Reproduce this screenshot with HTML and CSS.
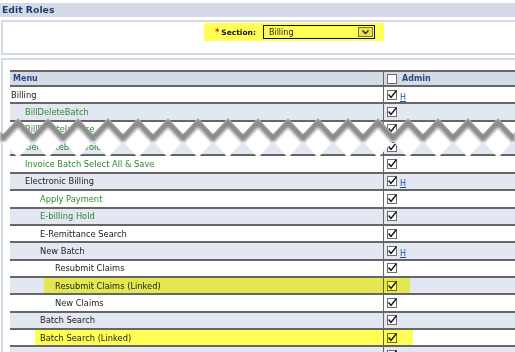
FILE: index.html
```html
<!DOCTYPE html>
<html lang="en">
<head>
    <meta charset="UTF-8">
    <title>Edit Roles</title>
    <link rel="stylesheet" href="styles.css">
</head>
<body>
    <div class="title-bar">Edit Roles</div>

    <div class="panel filter-panel">
        <div class="section-pick">
            <span class="req">*</span>
            <span class="section-label">Section:</span>
            <div class="fake-select">
                <span>Billing</span>
                <span class="drop-btn"><svg width="9" height="6" viewBox="0 0 9 6"><path d="M1.5 1.5 L4.5 4.5 L7.5 1.5"/></svg></span>
            </div>
        </div>
    </div>

    <div class="panel roles-panel">
        <div class="roles">
            <div class="row head">
                <div class="name">Menu</div>
                <div class="perm"><span class="box"></span><span class="admin">Admin</span></div>
            </div>
            <div class="row">
                <div class="name">Billing</div>
                <div class="perm"><span class="box"><svg viewBox="0 0 10 10"><path d="M1.6 4.6 L4 7.4 L9.4 0.6"/></svg></span><a class="h">H</a></div>
            </div>
            <div class="row alt">
                <div class="name lv1 page">BillDeleteBatch</div>
                <div class="perm"><span class="box"><svg viewBox="0 0 10 10"><path d="M1.6 4.6 L4 7.4 L9.4 0.6"/></svg></span></div>
            </div>
            <div class="row">
                <div class="name lv1 page">BillDeleteInvoice</div>
                <div class="perm"><span class="box"><svg viewBox="0 0 10 10"><path d="M1.6 4.6 L4 7.4 L9.4 0.6"/></svg></span></div>
            </div>
            <div class="row alt">
                <div class="name lv1 page">GenerateBillInvoices</div>
                <div class="perm"><span class="box"><svg viewBox="0 0 10 10"><path d="M1.6 4.6 L4 7.4 L9.4 0.6"/></svg></span></div>
            </div>
            <div class="row">
                <div class="name lv1 page">Invoice Batch Select All &amp; Save</div>
                <div class="perm"><span class="box"><svg viewBox="0 0 10 10"><path d="M1.6 4.6 L4 7.4 L9.4 0.6"/></svg></span></div>
            </div>
            <div class="row alt">
                <div class="name lv1">Electronic Billing</div>
                <div class="perm"><span class="box"><svg viewBox="0 0 10 10"><path d="M1.6 4.6 L4 7.4 L9.4 0.6"/></svg></span><a class="h">H</a></div>
            </div>
            <div class="row">
                <div class="name lv2 page">Apply Payment</div>
                <div class="perm"><span class="box"><svg viewBox="0 0 10 10"><path d="M1.6 4.6 L4 7.4 L9.4 0.6"/></svg></span></div>
            </div>
            <div class="row alt">
                <div class="name lv2 page">E-billing Hold</div>
                <div class="perm"><span class="box"><svg viewBox="0 0 10 10"><path d="M1.6 4.6 L4 7.4 L9.4 0.6"/></svg></span></div>
            </div>
            <div class="row">
                <div class="name lv2">E-Remittance Search</div>
                <div class="perm"><span class="box"><svg viewBox="0 0 10 10"><path d="M1.6 4.6 L4 7.4 L9.4 0.6"/></svg></span></div>
            </div>
            <div class="row alt">
                <div class="name lv2">New Batch</div>
                <div class="perm"><span class="box"><svg viewBox="0 0 10 10"><path d="M1.6 4.6 L4 7.4 L9.4 0.6"/></svg></span><a class="h">H</a></div>
            </div>
            <div class="row">
                <div class="name lv3">Resubmit Claims</div>
                <div class="perm"><span class="box"><svg viewBox="0 0 10 10"><path d="M1.6 4.6 L4 7.4 L9.4 0.6"/></svg></span></div>
            </div>
            <div class="row alt">
                <div class="name lv3">Resubmit Claims (Linked)</div>
                <div class="perm"><span class="box"><svg viewBox="0 0 10 10"><path d="M1.6 4.6 L4 7.4 L9.4 0.6"/></svg></span></div>
                <span class="mark mark-resubmit"></span>
            </div>
            <div class="row">
                <div class="name lv3">New Claims</div>
                <div class="perm"><span class="box"><svg viewBox="0 0 10 10"><path d="M1.6 4.6 L4 7.4 L9.4 0.6"/></svg></span></div>
            </div>
            <div class="row alt">
                <div class="name lv2">Batch Search</div>
                <div class="perm"><span class="box"><svg viewBox="0 0 10 10"><path d="M1.6 4.6 L4 7.4 L9.4 0.6"/></svg></span></div>
            </div>
            <div class="row">
                <div class="name lv2">Batch Search (Linked)</div>
                <div class="perm"><span class="box"><svg viewBox="0 0 10 10"><path d="M1.6 4.6 L4 7.4 L9.4 0.6"/></svg></span></div>
                <span class="mark mark-batch"></span>
            </div>
            <div class="row alt">
                <div class="name lv2"></div>
                <div class="perm"><span class="box"><svg viewBox="0 0 10 10"><path d="M1.6 4.6 L4 7.4 L9.4 0.6"/></svg></span></div>
            </div>
        </div>
    </div>

    <!-- torn edge, cut through the 3rd and 4th rows -->
    <svg class="tear" width="515" height="50" viewBox="0 0 515 50">
        <defs>
            <pattern id="gap" patternUnits="userSpaceOnUse" x="3" y="0" width="30" height="50">
                <polygon points="0,20 15,4 30,20 30,27 15,44 0,27" fill="#fff"/>
            </pattern>
            <pattern id="edge" patternUnits="userSpaceOnUse" x="3" y="0" width="30" height="50">
                <polyline points="-15,40 0,24 15,8 30,24 45,40" fill="none" stroke="#8a8a8a" stroke-width="7"/>
            </pattern>
            <filter id="soft" x="-5%" y="-20%" width="110%" height="140%">
                <feGaussianBlur stdDeviation="1.8"/>
            </filter>
            <mask id="gapMask">
                <rect width="515" height="50" fill="url(#gap)"/>
            </mask>
        </defs>
        <rect width="515" height="50" fill="url(#gap)"/>
        <g mask="url(#gapMask)">
            <rect width="515" height="50" fill="url(#edge)" filter="url(#soft)"/>
        </g>
    </svg>
</body>
</html>
```

FILE: styles.css
```css
html, body {
    overflow: hidden;
}
body {
    margin: 0;
    font-family: "DejaVu Sans", Verdana, sans-serif;
    font-size: 8.3px;
    color: #222;
    background-color: #fff;
}
.title-bar {
    margin-top: 3px;
    height: 14px;
    line-height: 14px;
    padding-left: 2px;
    background-color: #d5dae7;
    color: #1f3d6d;
    font-weight: bold;
    font-size: 9.3px;
}
.panel {
    margin: 3px 0 0 1px;
    border: 2px solid #d5dae7;
    border-right: none;
}
.filter-panel {
    height: 31px;
}
.section-pick {
    margin: 1px 0 0 201px;
    width: 180px;
    height: 18px;
    background-color: #ffff55;
    display: flex;
    align-items: center;
}
.req {
    margin-left: 11px;
    color: #e0161b;
    font-weight: bold;
}
.section-label {
    margin-left: 2px;
    font-weight: bold;
    font-size: 7.5px;
    color: #111;
}
.fake-select {
    margin-left: 7px;
    width: 112px;
    height: 14px;
    box-sizing: border-box;
    border: 1px solid #111;
    padding: 0 1px 0 5px;
    display: flex;
    align-items: center;
    justify-content: space-between;
    font-size: 8px;
}
.drop-btn {
    width: 15px;
    height: 10px;
    box-sizing: border-box;
    border: 1px solid #77774a;
    background-color: #e6e64c;
    display: flex;
    align-items: center;
    justify-content: center;
}
.drop-btn svg path {
    fill: none;
    stroke: #222;
    stroke-width: 1.3;
}
.roles-panel {
    padding: 10px 0 0 7px;
}
.roles {
    width: 600px;
}
.row {
    position: relative;
    display: flex;
    height: 17.36px;
    box-sizing: border-box;
    border-bottom: 2px solid #666;
}
.row.alt {
    background-color: #e3e7f1;
}
.row.head {
    height: 17px;
    border-top: 2px solid #666;
    background-color: #d5dae7;
    color: #2b4a80;
    font-weight: bold;
    font-size: 8px;
}
.name {
    width: 373px;
    flex-shrink: 0;
    box-sizing: border-box;
    padding-left: 1px;
    display: flex;
    align-items: center;
}
.head .name {
    padding-left: 3px;
}
.lv1 { padding-left: 15px; }
.lv2 { padding-left: 30px; }
.lv3 { padding-left: 45px; }
.page {
    color: #2c8a2c;
}
.perm {
    flex: 1;
    border-left: 1px solid #666;
    padding-left: 3px;
    display: flex;
    align-items: center;
    gap: 3px;
}
.admin {
    margin-left: 2px;
}
.box {
    display: block;
    width: 10px;
    height: 10px;
    box-sizing: border-box;
    border: 1px solid #6e6e6e;
    background-color: #fff;
}
.box svg {
    display: block;
    width: 10px;
    height: 10px;
    margin: -1px;
    overflow: visible;
}
.box svg path {
    fill: none;
    stroke: #111;
    stroke-width: 1.5;
}
.h {
    margin-top: 5px;
    color: #2d4f9e;
    text-decoration: underline;
    font-size: 8px;
}
.mark {
    position: absolute;
    top: 0;
    bottom: 0;
    background-color: #ffff55;
    mix-blend-mode: multiply;
}
.mark-resubmit {
    left: 34px;
    width: 366px;
}
.mark-batch {
    left: 25px;
    width: 378px;
}
.tear {
    position: absolute;
    left: 0;
    top: 114px;
}
```
